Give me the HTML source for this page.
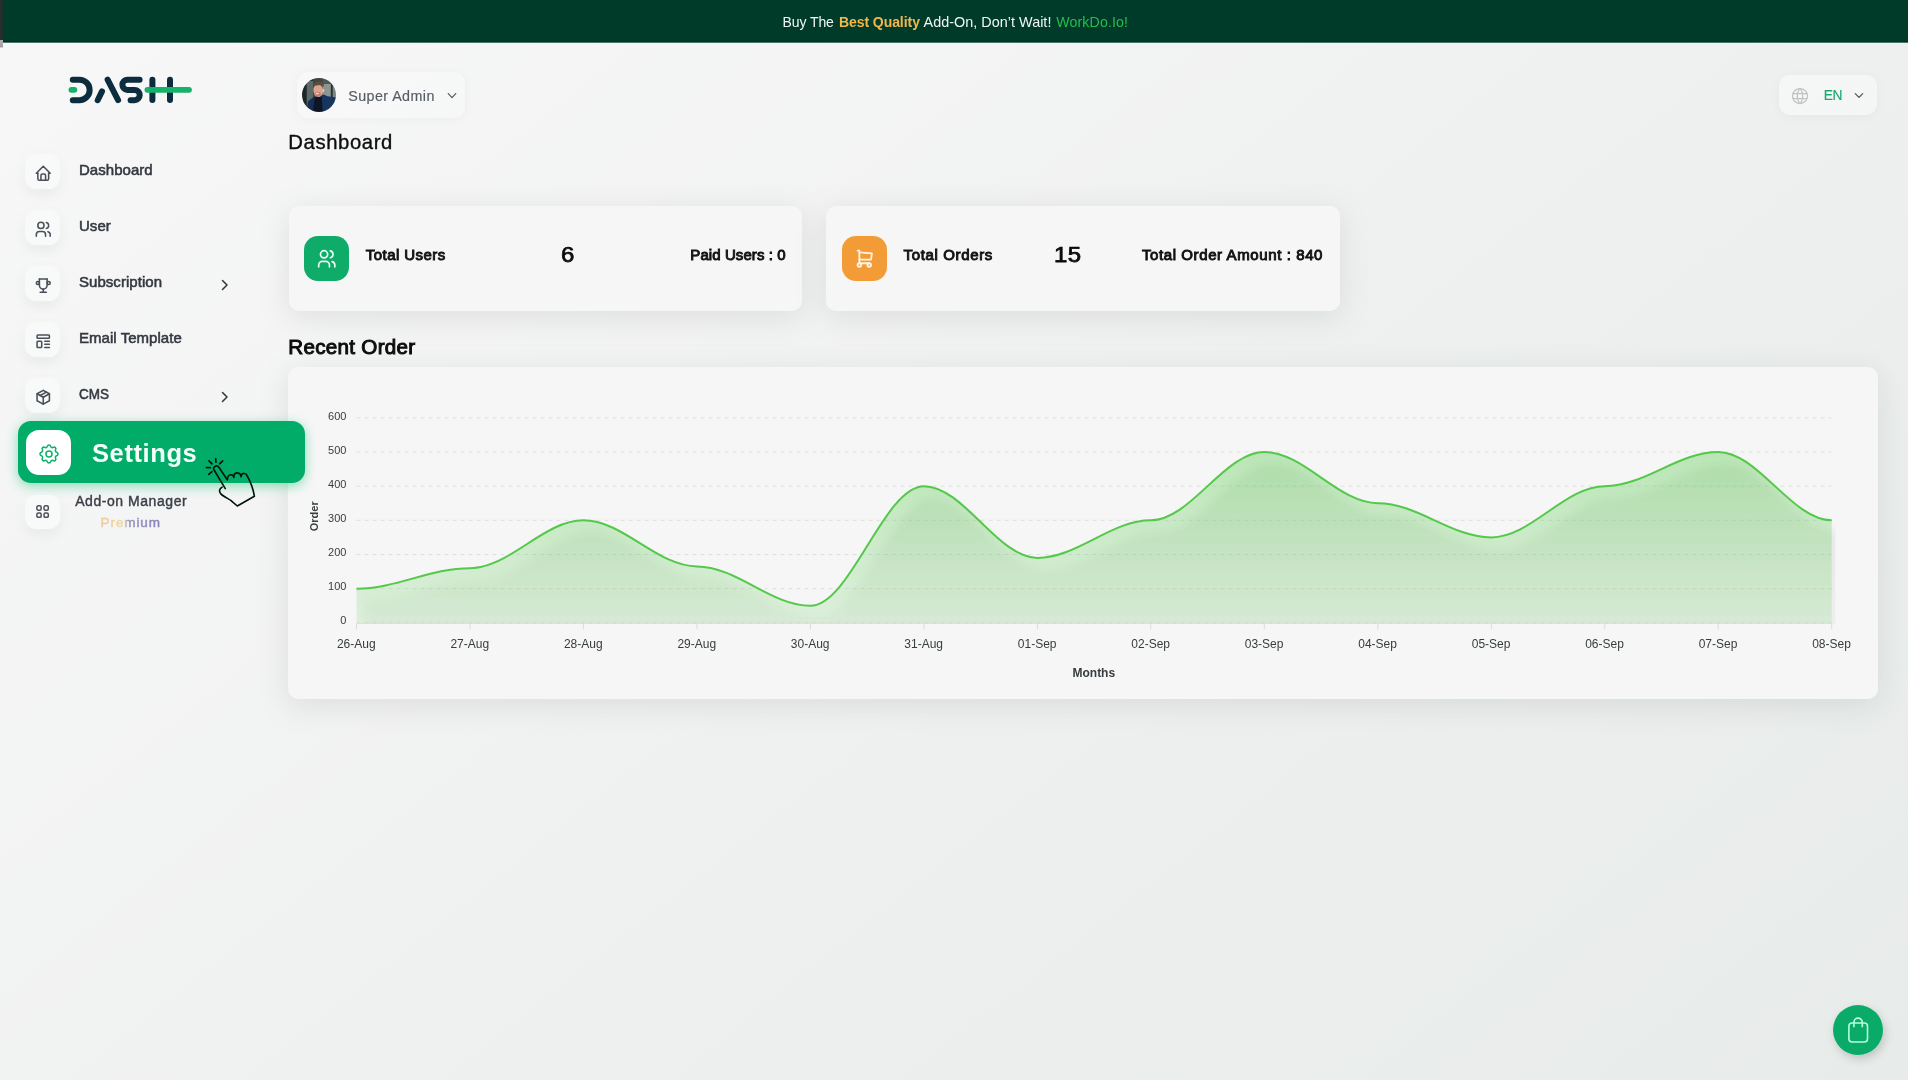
<!DOCTYPE html>
<html lang="en">
<head>
<meta charset="utf-8">
<title>Dashboard</title>
<style>
*{box-sizing:border-box;margin:0;padding:0}
html,body{width:1908px;height:1080px;overflow:hidden}
body{font-family:"Liberation Sans",sans-serif;color:#111;position:relative;
 background:linear-gradient(141.55deg,#f7f7f7 3.46%,#e7ebe9 99.86%);}
#wrap{position:absolute;left:0;top:0;width:1908px;height:1080px;will-change:transform}
.abs{position:absolute}
.t{position:absolute;white-space:nowrap;line-height:1}
/* banner */
#banner{position:absolute;left:0;top:0;width:1908px;height:43px;background:linear-gradient(#003b29 0,#003b29 41px,#003121 41px,#003121 42px,#4d766a 42px,#4d766a 43px)}
#banner .t{top:15px;font-size:14px;color:#f1f6f4}
#banner .t.o{color:#f2b84b;font-weight:bold}
#banner .t.g{color:#22be4f}
/* sidebar */
#sidebar{position:relative;z-index:5;width:0;height:0}
.ib{position:absolute;left:25.2px;width:34.6px;height:34.6px;border-radius:11.5px;background:#f8f9f9;
 box-shadow:0 5px 12px rgba(110,120,118,.10),0 0 6px rgba(255,255,255,.5)}
.ib svg{position:absolute;left:8.7px;top:9.7px;width:18.5px;height:18.5px;fill:none;stroke:#4a4f59;stroke-width:2.0;stroke-linecap:round;stroke-linejoin:round}
.nav{font-size:15px;color:#343840;-webkit-text-stroke:.55px #343840;letter-spacing:.04px;left:79px}
.chev{position:absolute;width:8px;height:12px;fill:none;stroke:#30353d;stroke-width:1.5;stroke-linecap:round;stroke-linejoin:round}
#prem{background:linear-gradient(90deg,#f3c795 0%,#f1d198 24%,#ecdc9b 38%,#9791bc 46%,#8583b7 100%);-webkit-background-clip:text;background-clip:text;color:transparent}
/* cards */
.ct{top:246.6px;font-size:15px;color:#121212;-webkit-text-stroke:.95px #121212;letter-spacing:0}
.num{top:243.6px;font-size:22px;transform:scaleX(1.09);transform-origin:0 0;color:#0b0b0b;-webkit-text-stroke:.75px #0b0b0b}
.card{position:absolute;background:#f6f6f6;border-radius:10px;box-shadow:0 6px 30px rgba(125,135,133,.19)}
</style>
</head>
<body>
<div id="wrap">
<div id="banner"><div class="t" style="left:782.6px;font-size:14px;letter-spacing:-.1px">Buy The</div><div class="t o" style="left:838.9px;font-size:14px;letter-spacing:-.06px">Best Quality</div><div class="t" style="left:923.6px;font-size:14.4px;letter-spacing:.02px;top:14.8px">Add-On, Don’t Wait!</div><div class="t g" style="left:1056.3px;font-size:14.2px;letter-spacing:.1px;top:14.9px">WorkDo.Io!</div></div>
<div class="abs" style="left:0;top:0;width:3px;height:40px;background:linear-gradient(90deg,#2b2b2b 0,#2b2b2b 2px,#15332b 2px,#15332b 3px)"></div><div class="abs" style="left:0;top:40px;width:3px;height:8px;background:linear-gradient(#b2b0b0 0,#a3a1a1 7px,#cfcfcf 7px,#cfcfcf 8px)"></div>

<!-- SIDEBAR -->
<div id="sidebar">
<svg class="abs" style="left:60px;top:68px" width="140" height="44" viewBox="60 68 140 44" fill="none" stroke-linecap="round" stroke-linejoin="round">
<g stroke="#0b2d3d" stroke-width="6">
<path d="M72.8 79.7H79.4A10.25 10.25 0 0 1 79.4 100.2H72.8"/>
<path d="M97.7 100.2L102 91.4"/>
<path d="M107.6 79.7L118.1 100.2"/>
<path d="M139.6 79.7H127.5A5.1 5.1 0 0 0 127.5 89.95H134.6A5.1 5.1 0 0 1 134.6 100.2H130.6"/>
<path d="M152.4 79.8V100.1"/>
<path d="M170 79.8V100.1"/>
</g>
<g stroke="#16b16a" stroke-width="5.8">
<path d="M71.4 89.8H74.4"/>
<path d="M147.4 89.8H189"/>
</g></svg>
<div class="ib" style="top:154.2px"><svg viewBox="0 0 24 24"><path d="M5 12l-2 0l9 -9l9 9l-2 0"/><path d="M5 12v7a2 2 0 0 0 2 2h10a2 2 0 0 0 2 -2v-7"/><path d="M9 21v-6a2 2 0 0 1 2 -2h2a2 2 0 0 1 2 2v6"/></svg></div>
<div class="t nav" style="top:161.6px">Dashboard</div>
<div class="ib" style="top:210.2px"><svg viewBox="0 0 24 24"><path d="M9 7m-4 0a4 4 0 1 0 8 0a4 4 0 1 0 -8 0"/><path d="M3 21v-2a4 4 0 0 1 4 -4h4a4 4 0 0 1 4 4v2"/><path d="M16 3.13a4 4 0 0 1 0 7.75"/><path d="M21 21v-2a4 4 0 0 0 -3 -3.85"/></svg></div>
<div class="t nav" style="top:217.6px">User</div>
<div class="ib" style="top:266.2px"><svg viewBox="0 0 24 24"><path d="M8 21l8 0"/><path d="M12 17l0 4"/><path d="M7 4l10 0"/><path d="M17 4v8a5 5 0 0 1 -10 0v-8"/><path d="M5 9m-2 0a2 2 0 1 0 4 0a2 2 0 1 0 -4 0"/><path d="M19 9m-2 0a2 2 0 1 0 4 0a2 2 0 1 0 -4 0"/></svg></div>
<div class="t nav" style="top:273.6px">Subscription</div>
<svg class="chev" style="left:221px;top:279.0px" viewBox="0 0 8 12"><path d="M1.5 1.5L6 6L1.5 10.5"/></svg>
<div class="ib" style="top:322.2px"><svg viewBox="0 0 24 24"><path d="M4 4m0 1a1 1 0 0 1 1 -1h14a1 1 0 0 1 1 1v2a1 1 0 0 1 -1 1h-14a1 1 0 0 1 -1 -1z"/><path d="M4 12m0 1a1 1 0 0 1 1 -1h4a1 1 0 0 1 1 1v6a1 1 0 0 1 -1 1h-4a1 1 0 0 1 -1 -1z"/><path d="M14 12l6 0"/><path d="M14 16l6 0"/><path d="M14 20l6 0"/></svg></div>
<div class="t nav" style="top:329.6px">Email Template</div>
<div class="ib" style="top:378.2px"><svg viewBox="0 0 24 24"><path d="M12 3l8 4.5l0 9l-8 4.5l-8 -4.5l0 -9l8 -4.5"/><path d="M12 12l8 -4.5"/><path d="M12 12l0 9"/><path d="M12 12l-8 -4.5"/><path d="M16 5.25l-8 4.5"/></svg></div>
<div class="t nav" style="top:385.6px;transform:scaleX(.9);transform-origin:0 0">CMS</div>
<svg class="chev" style="left:221px;top:391.0px" viewBox="0 0 8 12"><path d="M1.5 1.5L6 6L1.5 10.5"/></svg>
<div class="abs" style="left:18px;top:421px;width:287px;height:62px;border-radius:13px;background:#00ac67;box-shadow:0 3px 12px rgba(0,190,110,.45)"></div>
<div class="abs" style="left:26px;top:430px;width:45px;height:45px;border-radius:13px;background:#fff"></div>
<svg class="abs" style="left:36.75px;top:442px;width:24px;height:24px;fill:none;stroke:#12b06b;stroke-width:1.55;stroke-linecap:round;stroke-linejoin:round" viewBox="0 0 24 24"><path d="M10.325 4.317c.426 -1.756 2.924 -1.756 3.35 0a1.724 1.724 0 0 0 2.573 1.066c1.543 -.94 3.31 .826 2.37 2.37a1.724 1.724 0 0 0 1.065 2.572c1.756 .426 1.756 2.924 0 3.35a1.724 1.724 0 0 0 -1.066 2.573c.94 1.543 -.826 3.31 -2.37 2.37a1.724 1.724 0 0 0 -2.572 1.065c-.426 1.756 -2.924 1.756 -3.35 0a1.724 1.724 0 0 0 -2.573 -1.066c-1.543 .94 -3.31 -.826 -2.37 -2.37a1.724 1.724 0 0 0 -1.065 -2.572c-1.756 -.426 -1.756 -2.924 0 -3.35a1.724 1.724 0 0 0 1.066 -2.573c-.94 -1.543 .826 -3.31 2.37 -2.37c1 .608 2.296 .07 2.572 -1.065z"/><path d="M9 12a3 3 0 1 0 6 0a3 3 0 0 0 -6 0"/></svg>
<div class="t" style="left:92px;top:441.2px;font-size:25.5px;font-weight:bold;color:#f4fff9;letter-spacing:.6px">Settings</div>
<div class="ib" style="top:494.5px"><svg viewBox="0 0 24 24" style="left:9.3px;top:8.8px;width:17.2px;height:17.2px;stroke-width:2.1"><path d="M4 6a2 2 0 0 1 2 -2h2a2 2 0 0 1 2 2v2a2 2 0 0 1 -2 2h-2a2 2 0 0 1 -2 -2z"/><path d="M14 6a2 2 0 0 1 2 -2h2a2 2 0 0 1 2 2v2a2 2 0 0 1 -2 2h-2a2 2 0 0 1 -2 -2z"/><path d="M4 16a2 2 0 0 1 2 -2h2a2 2 0 0 1 2 2v2a2 2 0 0 1 -2 2h-2a2 2 0 0 1 -2 -2z"/><path d="M14 16a2 2 0 0 1 2 -2h2a2 2 0 0 1 2 2v2a2 2 0 0 1 -2 2h-2a2 2 0 0 1 -2 -2z"/></svg></div>
<div class="t nav" style="left:75.2px;top:493.7px;font-size:14px;letter-spacing:.55px;-webkit-text-stroke:.4px #3a3e46;color:#3a3e46">Add-on Manager</div>
<div class="t" id="prem" style="left:100.6px;top:515.6px;font-size:13.5px;letter-spacing:.9px;-webkit-text-stroke:.5px transparent">Premium</div>
<svg class="abs" style="left:200px;top:450px;z-index:9" width="64" height="64" viewBox="200 450 64 64" fill="none" stroke="#04140c" stroke-width="1.65" stroke-linecap="round" stroke-linejoin="round">
<path d="M222 487.2C219.4 488.4 218.6 491.6 220.8 493.8C223 496 227.5 498.3 231.3 500.8L237.3 506L254.4 496.3C253.3 488.6 250.4 481.6 247.2 475.8C246 473 242.6 472.6 241.4 475L241 476.6M241 476C240.4 472.4 235 471.6 233.9 475.6L233.9 477.6M233.8 477C233 473.8 228.6 474 227.6 477.4L227.3 479.9L218.9 467.2A2.95 2.95 0 0 0 213.6 469.3L225.3 488.6"/>
<path d="M215.7 458.7L215.9 462.2M208.9 460.9L212 463.8M219.6 463.8L222.7 460.8M206.4 467.6L210.4 467.6M208.8 474.4L212 471.6"/>
</svg>
</div>

<!-- HEADER -->
<div id="header">
<div class="abs" style="left:296.5px;top:72px;width:168px;height:45.5px;border-radius:11px;background:rgba(255,255,255,.22);box-shadow:0 1px 8px rgba(120,130,128,.07)"></div>
<svg class="abs" style="left:302.2px;top:77.9px" width="34" height="34" viewBox="0 0 34 34">
<defs><clipPath id="avc"><circle cx="17" cy="17" r="17"/></clipPath><filter id="avb" x="-5%" y="-5%" width="110%" height="110%"><feGaussianBlur stdDeviation=".55"/></filter></defs>
<g clip-path="url(#avc)"><g filter="url(#avb)">
<rect x="-2" y="-2" width="38" height="38" fill="#243030"/>
<rect x="-2" y="-2" width="7" height="38" fill="#1a2525"/>
<rect x="4.7" y="3" width="6.8" height="30" fill="#5c6a69"/>
<rect x="11.5" y="-2" width="9" height="24" fill="#3a4746"/>
<rect x="20.4" y="-2" width="8.6" height="9" fill="#495a57"/>
<rect x="20.4" y="6" width="8.6" height="16" fill="#8b9594"/>
<rect x="28.8" y="-2" width="2" height="24" fill="#273131"/>
<rect x="30.7" y="-2" width="5" height="24" fill="#7a8584"/>
<path d="M6 23.6L12.4 18.6L21.6 16.4L25.6 18.2L34.5 19.6L35 36L5 36Z" fill="#18365f"/>
<path d="M6 23.6L12.4 18.6L13.5 36L5 36Z" fill="#142f55"/>
<path d="M12.8 19.2L19.8 18.6L20.8 36L10.6 36Z" fill="#0a1620"/>
<ellipse cx="16.3" cy="12.6" rx="4.9" ry="6.4" transform="rotate(-8 16.3 12.6)" fill="#d8a58d"/>
<ellipse cx="15.6" cy="16.2" rx="3.3" ry="2.5" fill="#c58073"/>
<ellipse cx="15.3" cy="15.5" rx="1.7" ry=".7" fill="#ecd9d2"/>
<ellipse cx="21.3" cy="12.4" rx="1" ry="1.7" fill="#e3c2b3"/>
<path d="M11.3 9.4C11 6.6 12 4.9 13.6 4.2C15.4 3.2 19 2.8 21 4.6C22 5.8 22.1 7.4 21.6 9C20.9 7.6 20 6.9 18.6 6.9C17 6.9 15.4 7 13.9 7.6C12.6 8 11.8 8.6 11.3 9.4Z" fill="#664a3a"/>
</g></g></svg>
<div class="t" style="left:348.3px;top:89.4px;font-size:14.3px;color:#555b66;letter-spacing:.42px;-webkit-text-stroke:.15px #555b66">Super Admin</div>
<svg class="abs" style="left:446.5px;top:91.5px;fill:none;stroke:#5a5f68;stroke-width:1.3;stroke-linecap:round;stroke-linejoin:round" width="10" height="8" viewBox="0 0 10 8"><path d="M1.3 1.6L5 5.6L8.7 1.6"/></svg>
<div class="t" style="left:288.3px;top:131.6px;font-size:20.3px;color:#0e0e0e;letter-spacing:.6px;-webkit-text-stroke:.35px #0e0e0e">Dashboard</div>
<div class="abs" style="left:1779px;top:74.5px;width:98px;height:40.5px;border-radius:11px;background:rgba(255,255,255,.42);box-shadow:0 2px 8px rgba(120,130,128,.07)"></div>
<svg class="abs" style="left:1790.2px;top:86px;fill:none;stroke:#c1c3c3;stroke-width:1.5;stroke-linecap:round;stroke-linejoin:round" width="20" height="20" viewBox="0 0 24 24"><path d="M3 12a9 9 0 1 0 18 0a9 9 0 0 0 -18 0"/><path d="M3.6 9h16.8"/><path d="M3.6 15h16.8"/><path d="M11.5 3a17 17 0 0 0 0 18"/><path d="M12.5 3a17 17 0 0 1 0 18"/></svg>
<div class="t" style="left:1823.7px;top:89px;font-size:13.8px;color:#18a76c;-webkit-text-stroke:.12px #18a76c;letter-spacing:-.35px">EN</div>
<svg class="abs" style="left:1854px;top:92px;fill:none;stroke:#555a62;stroke-width:1.3;stroke-linecap:round;stroke-linejoin:round" width="10" height="8" viewBox="0 0 10 8"><path d="M1.3 1.6L5 5.4L8.7 1.6"/></svg>
</div>

<!-- CARDS -->
<div id="cards">
<div class="card" style="left:288.5px;top:205.5px;width:513.5px;height:105px"></div>
<div class="card" style="left:826px;top:205.5px;width:514px;height:105px"></div>
<div class="abs" style="left:304.3px;top:236px;width:44.6px;height:45px;border-radius:14px;background:#0fab68"></div>
<svg class="abs" style="left:316px;top:248.2px;fill:none;stroke:#e9fff4;stroke-width:1.9;stroke-linecap:round;stroke-linejoin:round" width="21.5" height="21.5" viewBox="0 0 24 24"><path d="M9 7m-4 0a4 4 0 1 0 8 0a4 4 0 1 0 -8 0"/><path d="M3 21v-2a4 4 0 0 1 4 -4h4a4 4 0 0 1 4 4v2"/><path d="M16 3.13a4 4 0 0 1 0 7.75"/><path d="M21 21v-2a4 4 0 0 0 -3 -3.85"/></svg>
<div class="abs" style="left:842.2px;top:236px;width:44.6px;height:45px;border-radius:14px;background:#f39c37"></div>
<svg class="abs" style="left:853.8px;top:248.3px;fill:none;stroke:#fff3e2;stroke-width:2;stroke-linecap:round;stroke-linejoin:round" width="21.5" height="21.5" viewBox="0 0 24 24"><path d="M6 19m-2 0a2 2 0 1 0 4 0a2 2 0 1 0 -4 0"/><path d="M17 19m-2 0a2 2 0 1 0 4 0a2 2 0 1 0 -4 0"/><path d="M17 17h-11v-14h-2"/><path d="M6 5l14 1l-1 7h-13"/></svg>
<div class="t ct" style="left:365.8px;letter-spacing:.44px">Total Users</div>
<div class="t num" style="left:560.6px">6</div>
<div class="t ct" style="left:690.3px;letter-spacing:.08px">Paid Users : 0</div>
<div class="t ct" style="left:903.5px;letter-spacing:.65px">Total Orders</div>
<div class="t num" style="left:1053.6px;letter-spacing:.3px">15</div>
<div class="t ct" style="left:1141.9px;letter-spacing:.6px">Total Order Amount : 840</div>
<div class="t" style="left:288.3px;top:336.6px;font-size:20.6px;color:#0d0d0d;-webkit-text-stroke:1px #0d0d0d;letter-spacing:.3px">Recent Order</div>
</div>

<!-- CHART -->
<div id="chart">
<div class="card" style="left:288px;top:367.3px;width:1590px;height:331.5px"></div>
<svg class="abs" style="left:288px;top:367px" width="1590" height="332" viewBox="0 0 1590 332" font-family="Liberation Sans, sans-serif">
<defs>
<linearGradient id="ag" x1="0" y1="0" x2="0" y2="1"><stop offset="0" stop-color="#55c94a" stop-opacity=".37"/><stop offset="1" stop-color="#55c94a" stop-opacity=".15"/></linearGradient>
<filter id="ds" x="-2%" y="-10%" width="104%" height="125%"><feGaussianBlur in="SourceAlpha" stdDeviation="4.5"/><feOffset dx="8" dy="12" result="ob"/><feFlood flood-color="#3c463c" flood-opacity=".3"/><feComposite in2="ob" operator="in" result="sh"/><feMerge><feMergeNode in="sh"/><feMergeNode in="SourceGraphic"/></feMerge></filter>
<clipPath id="cc"><rect x="67.5" y="0" width="1479.8" height="257.0"/></clipPath>
</defs>
<line x1="68.5" y1="255.8" x2="1543.7" y2="255.8" stroke="#e0e0e0" stroke-width="1" stroke-dasharray="4 4"/>
<line x1="68.5" y1="221.63" x2="1543.7" y2="221.63" stroke="#e0e0e0" stroke-width="1" stroke-dasharray="4 4"/>
<line x1="68.5" y1="187.47" x2="1543.7" y2="187.47" stroke="#e0e0e0" stroke-width="1" stroke-dasharray="4 4"/>
<line x1="68.5" y1="153.3" x2="1543.7" y2="153.3" stroke="#e0e0e0" stroke-width="1" stroke-dasharray="4 4"/>
<line x1="68.5" y1="119.13" x2="1543.7" y2="119.13" stroke="#e0e0e0" stroke-width="1" stroke-dasharray="4 4"/>
<line x1="68.5" y1="84.97" x2="1543.7" y2="84.97" stroke="#e0e0e0" stroke-width="1" stroke-dasharray="4 4"/>
<line x1="68.5" y1="50.8" x2="1543.7" y2="50.8" stroke="#e0e0e0" stroke-width="1" stroke-dasharray="4 4"/>
<g clip-path="url(#cc)"><path d="M68.5 221.63C108.22 221.63 142.26 201.13 181.98 201.13C221.69 201.13 255.74 153.3 295.45 153.3C335.17 153.3 369.21 199.42 408.93 199.42C448.65 199.42 482.69 238.72 522.41 238.72C562.12 238.72 596.17 119.13 635.88 119.13C675.6 119.13 709.64 190.88 749.36 190.88C789.08 190.88 823.12 153.3 862.84 153.3C902.56 153.3 936.6 84.97 976.32 84.97C1016.03 84.97 1050.08 136.22 1089.79 136.22C1129.51 136.22 1163.55 170.38 1203.27 170.38C1242.99 170.38 1277.03 119.13 1316.75 119.13C1356.46 119.13 1390.51 84.97 1430.22 84.97C1469.94 84.97 1503.98 153.3 1543.7 153.3L1543.7 255.8L68.5 255.8Z" fill="url(#ag)" filter="url(#ds)"/></g>
<path d="M68.5 221.63C108.22 221.63 142.26 201.13 181.98 201.13C221.69 201.13 255.74 153.3 295.45 153.3C335.17 153.3 369.21 199.42 408.93 199.42C448.65 199.42 482.69 238.72 522.41 238.72C562.12 238.72 596.17 119.13 635.88 119.13C675.6 119.13 709.64 190.88 749.36 190.88C789.08 190.88 823.12 153.3 862.84 153.3C902.56 153.3 936.6 84.97 976.32 84.97C1016.03 84.97 1050.08 136.22 1089.79 136.22C1129.51 136.22 1163.55 170.38 1203.27 170.38C1242.99 170.38 1277.03 119.13 1316.75 119.13C1356.46 119.13 1390.51 84.97 1430.22 84.97C1469.94 84.97 1503.98 153.3 1543.7 153.3" fill="none" stroke="#54c84a" stroke-width="2" stroke-linecap="butt"/>
<line x1="68.5" y1="256.3" x2="1543.7" y2="256.3" stroke="#dcdcdc" stroke-width="1"/>
<line x1="68.5" y1="256.3" x2="68.5" y2="262.3" stroke="#dcdcdc" stroke-width="1"/>
<text x="68.3" y="281.3" text-anchor="middle" font-size="12" fill="#373d3f">26-Aug</text>
<line x1="181.98" y1="256.3" x2="181.98" y2="262.3" stroke="#dcdcdc" stroke-width="1"/>
<text x="181.78" y="281.3" text-anchor="middle" font-size="12" fill="#373d3f">27-Aug</text>
<line x1="295.45" y1="256.3" x2="295.45" y2="262.3" stroke="#dcdcdc" stroke-width="1"/>
<text x="295.25" y="281.3" text-anchor="middle" font-size="12" fill="#373d3f">28-Aug</text>
<line x1="408.93" y1="256.3" x2="408.93" y2="262.3" stroke="#dcdcdc" stroke-width="1"/>
<text x="408.73" y="281.3" text-anchor="middle" font-size="12" fill="#373d3f">29-Aug</text>
<line x1="522.41" y1="256.3" x2="522.41" y2="262.3" stroke="#dcdcdc" stroke-width="1"/>
<text x="522.21" y="281.3" text-anchor="middle" font-size="12" fill="#373d3f">30-Aug</text>
<line x1="635.88" y1="256.3" x2="635.88" y2="262.3" stroke="#dcdcdc" stroke-width="1"/>
<text x="635.68" y="281.3" text-anchor="middle" font-size="12" fill="#373d3f">31-Aug</text>
<line x1="749.36" y1="256.3" x2="749.36" y2="262.3" stroke="#dcdcdc" stroke-width="1"/>
<text x="749.16" y="281.3" text-anchor="middle" font-size="12" fill="#373d3f">01-Sep</text>
<line x1="862.84" y1="256.3" x2="862.84" y2="262.3" stroke="#dcdcdc" stroke-width="1"/>
<text x="862.64" y="281.3" text-anchor="middle" font-size="12" fill="#373d3f">02-Sep</text>
<line x1="976.32" y1="256.3" x2="976.32" y2="262.3" stroke="#dcdcdc" stroke-width="1"/>
<text x="976.12" y="281.3" text-anchor="middle" font-size="12" fill="#373d3f">03-Sep</text>
<line x1="1089.79" y1="256.3" x2="1089.79" y2="262.3" stroke="#dcdcdc" stroke-width="1"/>
<text x="1089.59" y="281.3" text-anchor="middle" font-size="12" fill="#373d3f">04-Sep</text>
<line x1="1203.27" y1="256.3" x2="1203.27" y2="262.3" stroke="#dcdcdc" stroke-width="1"/>
<text x="1203.07" y="281.3" text-anchor="middle" font-size="12" fill="#373d3f">05-Sep</text>
<line x1="1316.75" y1="256.3" x2="1316.75" y2="262.3" stroke="#dcdcdc" stroke-width="1"/>
<text x="1316.55" y="281.3" text-anchor="middle" font-size="12" fill="#373d3f">06-Sep</text>
<line x1="1430.22" y1="256.3" x2="1430.22" y2="262.3" stroke="#dcdcdc" stroke-width="1"/>
<text x="1430.02" y="281.3" text-anchor="middle" font-size="12" fill="#373d3f">07-Sep</text>
<line x1="1543.7" y1="256.3" x2="1543.7" y2="262.3" stroke="#dcdcdc" stroke-width="1"/>
<text x="1543.5" y="281.3" text-anchor="middle" font-size="12" fill="#373d3f">08-Sep</text>
<text x="58.4" y="257.1" text-anchor="end" font-size="11" fill="#373d3f">0</text>
<text x="58.4" y="223.08" text-anchor="end" font-size="11" fill="#373d3f">100</text>
<text x="58.4" y="189.06" text-anchor="end" font-size="11" fill="#373d3f">200</text>
<text x="58.4" y="155.04" text-anchor="end" font-size="11" fill="#373d3f">300</text>
<text x="58.4" y="121.02" text-anchor="end" font-size="11" fill="#373d3f">400</text>
<text x="58.4" y="87.0" text-anchor="end" font-size="11" fill="#373d3f">500</text>
<text x="58.4" y="52.98" text-anchor="end" font-size="11" fill="#373d3f">600</text>
<text transform="translate(30.4 149.3) rotate(-90)" text-anchor="middle" font-size="11" font-weight="bold" fill="#373d3f">Order</text>
<text x="805.8" y="310" text-anchor="middle" font-size="12" font-weight="bold" fill="#373d3f">Months</text>
</svg>
</div><!--/chart-->

<!-- FAB -->
<div id="fab"><div class="abs" style="left:1833px;top:1005px;width:50px;height:50px;border-radius:50%;background:#0aab68;box-shadow:2px 4px 8px rgba(90,100,98,.28)"></div><svg class="abs" style="left:1847px;top:1015px;fill:none;stroke:#b3ffdc;stroke-width:1.6;stroke-linecap:round;stroke-linejoin:round" width="22" height="30" viewBox="0 0 22 30"><rect x="1.9" y="8" width="18.6" height="19" rx="3.2"/><path d="M6.9 11.8V7.3a4.2 4.2 0 0 1 8.4 0V11.8"/></svg></div>
</div>
</body>
</html>
